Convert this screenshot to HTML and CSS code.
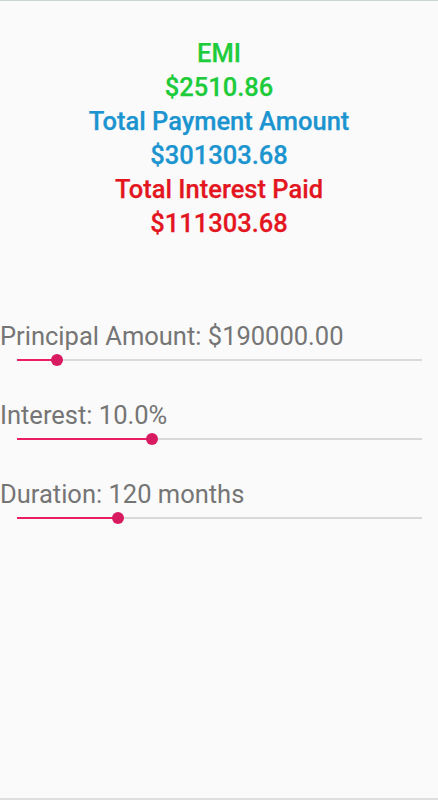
FILE: index.html
```html
<!DOCTYPE html>
<html>
<head>
<meta charset="utf-8">
<link rel="stylesheet" href="styles.css">
</head>
<body>
<div class="screen">
  <div class="results">
    <div class="line green">EMI</div>
    <div class="line green">$2510.86</div>
    <div class="line blue">Total Payment Amount</div>
    <div class="line blue">$301303.68</div>
    <div class="line red">Total Interest Paid</div>
    <div class="line red">$111303.68</div>
  </div>
  <div class="controls">
    <div class="control">
      <div class="label">Principal Amount: $190000.00</div>
      <div class="slider">
        <div class="track"><div class="active" style="width:40px"></div><div class="thumb"></div></div>
      </div>
    </div>
    <div class="control">
      <div class="label">Interest: 10.0%</div>
      <div class="slider">
        <div class="track"><div class="active" style="width:135px"></div><div class="thumb"></div></div>
      </div>
    </div>
    <div class="control">
      <div class="label">Duration: 120 months</div>
      <div class="slider">
        <div class="track"><div class="active" style="width:101px"></div><div class="thumb"></div></div>
      </div>
    </div>
  </div>
</div>
</body>
</html>
```

FILE: styles.css
```css
html, body {
  margin: 0;
  padding: 0;
  background: #fafafa;
}
.screen {
  width: 438px;
  height: 800px;
  box-sizing: border-box;
  border-top: 1px solid #c9d6d6;
  border-bottom: 2px solid #dedede;
  font-family: Roboto, "Noto Sans", sans-serif;
  overflow: hidden;
}
.results {
  padding-top: 35px;
  text-align: center;
}
.line {
  font-size: 25.5px;
  font-weight: 500;
  line-height: 34px;
  -webkit-text-stroke: 0.25px currentColor;
}
.green { color: #1ecb3a; }
.blue { color: #1b94cf; }
.red { color: #e3161f; }
.controls {
  padding-top: 80px;
  display: flex;
  flex-direction: column;
  gap: 31px;
}
.label {
  font-size: 25.5px;
  line-height: 32px;
  color: #757575;
}
.slider {
  padding: 0 16px 0 17px;
  height: 16px;
  display: flex;
  align-items: center;
}
.track {
  position: relative;
  flex: 1;
  height: 2px;
  background: #d9d9d9;
  display: flex;
  align-items: center;
}
.active {
  height: 2px;
  background: #e91e63;
}
.thumb {
  width: 12px;
  height: 12px;
  border-radius: 50%;
  background: #d81b60;
  margin-left: -6px;
}
```
